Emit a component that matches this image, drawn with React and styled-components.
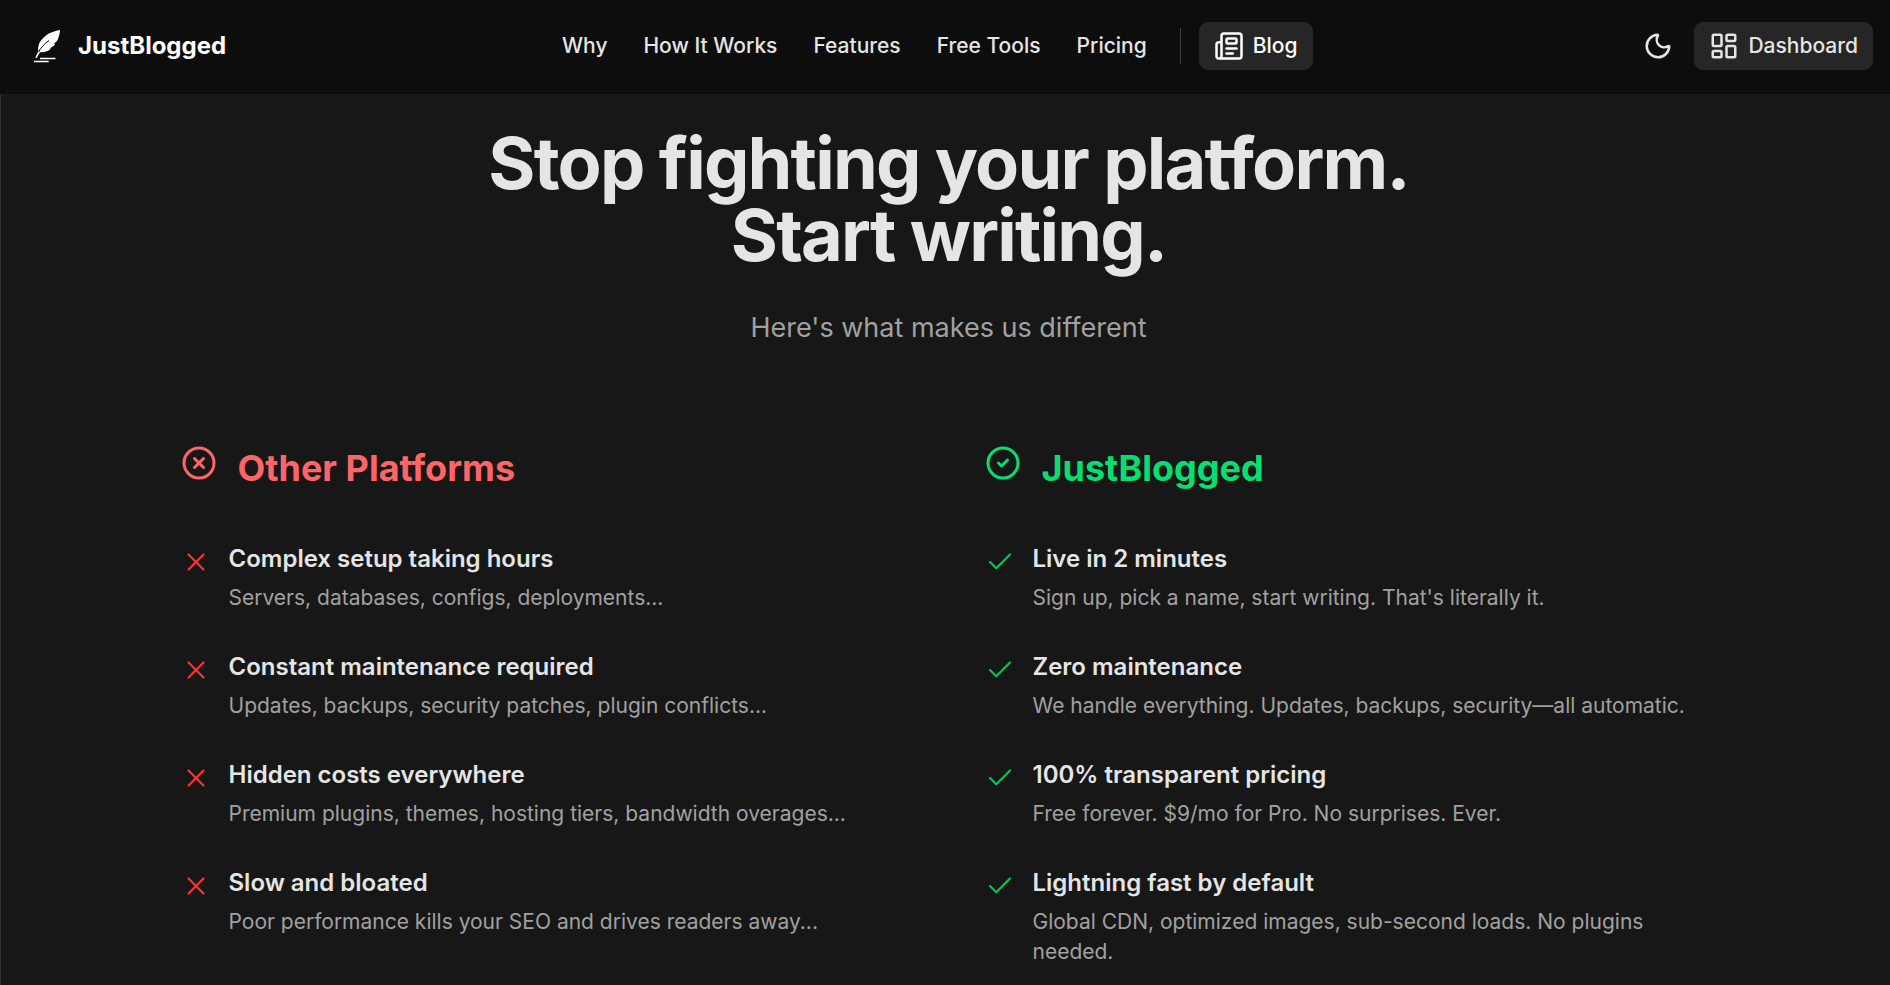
import React from 'react'
import styled, { createGlobalStyle } from 'styled-components'
import { Moon, Newspaper, LayoutDashboard, CircleX, CircleCheck, X, Check } from 'lucide-react'

const colors = {
  page: '#171717',
  bar: '#0d0d0d',
  line: '#1c1c1c',
  edge: '#333333',
  divider: '#404040',
  button: '#262626',
  text: '#e5e5e5',
  white: '#ffffff',
  muted: '#a1a1a1',
  red: '#ff6467',
  redDark: '#ff3030',
  green: '#05df72',
  greenDark: '#00c950',
}

const others = [
  ['Complex setup taking hours', 'Servers, databases, configs, deployments...'],
  ['Constant maintenance required', 'Updates, backups, security patches, plugin conflicts...'],
  ['Hidden costs everywhere', 'Premium plugins, themes, hosting tiers, bandwidth overages...'],
  ['Slow and bloated', 'Poor performance kills your SEO and drives readers away...'],
]

const ours = [
  ['Live in 2 minutes', "Sign up, pick a name, start writing. That's literally it."],
  ['Zero maintenance', 'We handle everything. Updates, backups, security—all automatic.'],
  ['100% transparent pricing', 'Free forever. $9/mo for Pro. No surprises. Ever.'],
  ['Lightning fast by default', 'Global CDN, optimized images, sub-second loads. No plugins needed.'],
]

// Styled components
const GlobalStyle = createGlobalStyle`
  * { box-sizing: border-box; }
  body {
    margin: 0;
    background-color: ${colors.page};
    color: ${colors.text};
    font-family: Inter, sans-serif;
  }
  h1, h2, h3, p, ul { margin: 0; padding: 0; }
  ul { list-style: none; }
`;

const Header = styled.header`
  display: flex;
  justify-content: space-between;
  align-items: center;
  padding: 22px 17px 24px 28px;
  background-color: ${colors.bar};
  border-bottom: 1px solid ${colors.line};
`;

const Brand = styled.a`
  display: flex;
  align-items: center;
  gap: 14px;
  padding-right: 14px;
  font-size: 24px;
  line-height: 36px;
  font-weight: 700;
  color: ${colors.white};
  text-decoration: none;
`;

const Nav = styled.nav`
  display: flex;
  align-items: center;
  gap: 36px;
`;

const NavLink = styled.a`
  padding-bottom: 2px;
  font-size: 21px;
  font-weight: 500;
  color: ${colors.text};
  text-decoration: none;
`;

const BlogGroup = styled.div`
  display: flex;
  align-items: center;
  gap: 18px;
  margin-left: -3px;
  &::before {
    content: '';
    width: 1px;
    height: 36px;
    background-color: ${colors.divider};
  }
`;

const ButtonLink = styled.a`
  display: flex;
  align-items: center;
  gap: 9px;
  height: 48px;
  padding: 0 15px;
  border-radius: 9px;
  background-color: ${colors.button};
  font-size: 21px;
  font-weight: 500;
  color: ${({$bright}) => $bright ? colors.white : colors.text};
  text-decoration: none;
`;

const ButtonText = styled.span`
  padding-bottom: 2px;
`;

const Actions = styled.div`
  display: flex;
  align-items: center;
  gap: 12px;
`;

const IconButton = styled.button`
  display: flex;
  padding: 9px;
  border: 0;
  background: none;
  color: ${colors.text};
`;

const Section = styled.main`
  padding: 32px 24px 24px 30px;
  border-left: 1px solid ${colors.edge};
`;

const Title = styled.h1`
  font-size: 72px;
  line-height: 72px;
  font-weight: 700;
  letter-spacing: -0.025em;
  text-align: center;
`;

const Lead = styled.p`
  margin-top: 36px;
  font-size: 27px;
  line-height: 42px;
  color: ${colors.muted};
  text-align: center;
`;

const Columns = styled.div`
  display: grid;
  grid-template-columns: 1fr 1fr;
  gap: 72px;
  max-width: 1536px;
  margin: 96px auto 0;
`;

const ColumnHead = styled.div`
  display: flex;
  gap: 21px;
  margin-bottom: 50px;
  color: ${({$color}) => $color};
`;

const ColumnTitle = styled.h2`
  font-size: 36px;
  line-height: 46px;
  font-weight: 700;
`;

const List = styled.ul`
  display: grid;
  gap: 36px;
`;

const Item = styled.li`
  display: flex;
  gap: 18px;
`;

const Mark = styled.span`
  display: flex;
  padding-top: 6px;
  color: ${({$color}) => $color};
`;

const ItemTitle = styled.h3`
  font-size: 24px;
  line-height: 36px;
  font-weight: 600;
`;

const ItemText = styled.p`
  margin-top: 6px;
  font-size: 21px;
  line-height: 30px;
  color: ${colors.muted};
`;

// Quill with two lines of writing under it
const Feather = () => (
  <svg width="36" height="38" viewBox="0 0 36 38" aria-hidden="true">
    <path fill="currentColor" d="M32 3C27 4 22 5.500 18.500 8C14 11.500 11 15 10.300 19.500C10 21.500 10.200 23 10.600 24L7.300 30.600L8.700 31L12 25.200C16 25.600 20.500 24.500 23 21.500L21.500 21.300C24 20.300 26 19 27.300 16.800L25.500 16.600C27.500 15.800 29.200 14 30 12C31.200 9 31.800 6 32 3Z" />
    <path fill="none" stroke={colors.bar} strokeWidth="1" d="M10.600 25C13 20.500 16.500 16.500 21 13.500" />
    <path fill="none" stroke="currentColor" strokeWidth="1.400" d="M12 31.500h15.500M6 34.500h14.700" />
  </svg>
)

const Column = ({ title, color, markColor, HeadIcon, MarkIcon, items }) => (
  <section>
    <ColumnHead $color={color}>
      <HeadIcon size={36} />
      <ColumnTitle>{title}</ColumnTitle>
    </ColumnHead>
    <List>
      {items.map(([name, text]) => (
        <Item key={name}>
          <Mark $color={markColor}><MarkIcon size={30} strokeWidth={1.75} /></Mark>
          <div>
            <ItemTitle>{name}</ItemTitle>
            <ItemText>{text}</ItemText>
          </div>
        </Item>
      ))}
    </List>
  </section>
)

// Render
const App = () => (
  <>
    <GlobalStyle />
    <Header>
      <Brand href="#"><Feather />JustBlogged</Brand>
      <Nav>
        <NavLink href="#why">Why</NavLink>
        <NavLink href="#how">How It Works</NavLink>
        <NavLink href="#features">Features</NavLink>
        <NavLink href="#tools">Free Tools</NavLink>
        <NavLink href="#pricing">Pricing</NavLink>
        <BlogGroup>
          <ButtonLink $bright href="#blog"><Newspaper size={30} /><ButtonText>Blog</ButtonText></ButtonLink>
        </BlogGroup>
      </Nav>
      <Actions>
        <IconButton type="button" aria-label="Toggle theme"><Moon size={30} /></IconButton>
        <ButtonLink href="#dashboard"><LayoutDashboard size={30} /><ButtonText>Dashboard</ButtonText></ButtonLink>
      </Actions>
    </Header>
    <Section>
      <Title>Stop fighting your platform.<br />Start writing.</Title>
      <Lead>Here's what makes us different</Lead>
      <Columns>
        <Column title="Other Platforms" color={colors.red} markColor={colors.redDark} HeadIcon={CircleX} MarkIcon={X} items={others} />
        <Column title="JustBlogged" color={colors.green} markColor={colors.greenDark} HeadIcon={CircleCheck} MarkIcon={Check} items={ours} />
      </Columns>
    </Section>
  </>
)

export default App
